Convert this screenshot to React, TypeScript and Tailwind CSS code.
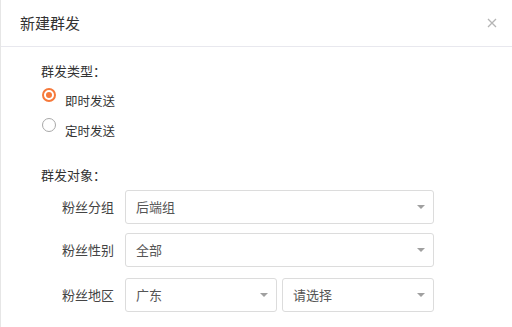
import React from "react";

const font = { fontFamily: '"Noto Sans CJK SC", "Noto Sans", sans-serif' };

function Arrow() {
  return (
    <svg width="8" height="4" viewBox="0 0 8 4" className="shrink-0">
      <path d="M0 0 L8 0 L4 4 Z" fill="#a0a0a0" />
    </svg>
  );
}

function Select({ text, className }: { text: string; className: string }) {
  return (
    <div
      className={`flex h-[34px] shrink-0 items-center justify-between rounded-[3px] border border-[#dcdcdc] pl-[10px] pr-[8px] text-[13px] text-[#555] ${className}`}
    >
      <span>{text}</span>
      <Arrow />
    </div>
  );
}

function Row({ label, children, className }: { label: string; children: React.ReactNode; className?: string }) {
  return (
    <div className={`flex items-center ${className ?? ""}`}>
      <div className="w-[84px] shrink-0 whitespace-nowrap pr-[11px] text-right text-[13px] text-[#444]">{label}</div>
      {children}
    </div>
  );
}

export default function App() {
  return (
    <div className="h-[327px] w-[512px] overflow-hidden border-l border-[#e6e6e6] bg-white" style={font}>
      <div className="flex h-[47px] items-center justify-between border-b border-[#e8e8ee] pl-[19px] pr-[15px]">
        <span className="text-[15px] text-[#333]">新建群发</span>
        <svg width="10" height="10" viewBox="0 0 10 10">
          <path d="M1 1 L9 9 M9 1 L1 9" stroke="#b5b5b5" strokeWidth="1.3" />
        </svg>
      </div>
      <div className="pl-[40px] pt-[15px]">
        <div className="text-[13px] leading-[18px] text-[#333]">群发类型：</div>
        <div className="mt-[8px] flex items-start">
          <div className="ml-[1px] flex h-[14px] w-[14px] items-center justify-center rounded-full border-2 border-[#f6793a]">
            <div className="h-[6px] w-[6px] rounded-full bg-[#f6793a]" />
          </div>
          <span className="ml-[9px] mt-[4px] text-[12.5px] leading-[18px] text-[#333]">即时发送</span>
        </div>
        <div className="mt-[8px] flex items-start">
          <div className="ml-[1px] h-[14px] w-[14px] rounded-full border-[1.5px] border-[#a8a8a8]" />
          <span className="ml-[9px] mt-[4px] text-[12.5px] leading-[18px] text-[#333]">定时发送</span>
        </div>
        <div className="mt-[26px] text-[13px] leading-[18px] text-[#333]">群发对象：</div>
        <div className="mt-[6px] flex flex-col">
          <Row label="粉丝分组">
            <Select text="后端组" className="w-[309px]" />
          </Row>
          <Row label="粉丝性别" className="mt-[9px]">
            <Select text="全部" className="w-[309px]" />
          </Row>
          <Row label="粉丝地区" className="mt-[11px]">
            <div className="flex gap-[5px]">
              <Select text="广东" className="w-[152px]" />
              <Select text="请选择" className="w-[152px]" />
            </div>
          </Row>
        </div>
      </div>
    </div>
  );
}
